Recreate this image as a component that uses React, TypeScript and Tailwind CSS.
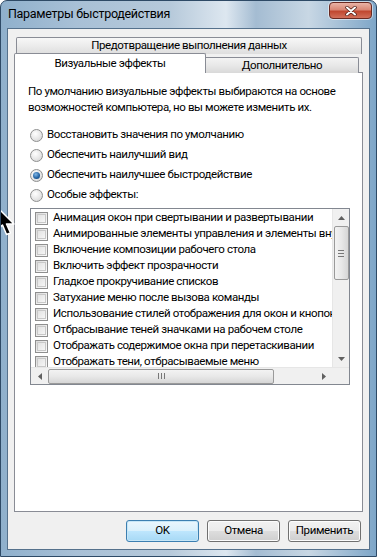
const effects = [
  "Анимация окон при свертывании и развертывании",
  "Анимированные элементы управления и элементы внутри окна",
  "Включение композиции рабочего стола",
  "Включить эффект прозрачности",
  "Гладкое прокручивание списков",
  "Затухание меню после вызова команды",
  "Использование стилей отображения для окон и кнопок",
  "Отбрасывание теней значками на рабочем столе",
  "Отображать содержимое окна при перетаскивании",
  "Отображать тени, отбрасываемые меню",
];

const radios = [
  { label: "Восстановить значения по умолчанию", checked: false },
  { label: "Обеспечить наилучший вид", checked: false },
  { label: "Обеспечить наилучшее быстродействие", checked: true },
  { label: "Особые эффекты:", checked: false },
];

function Radio({ checked }: { checked: boolean }) {
  return (
    <span className="w-[13px] h-[13px] rounded-full border border-[#8e8f8f] bg-[radial-gradient(circle_at_40%_35%,#ffffff_0%,#e6e6e6_55%,#cfcfcf_100%)] flex items-center justify-center shrink-0">
      {checked && (
        <span className="w-[7px] h-[7px] rounded-full bg-[radial-gradient(circle_at_40%_35%,#7fb6e6_0%,#1f5f9f_60%,#123f6e_100%)]" />
      )}
    </span>
  );
}

function Checkbox() {
  return (
    <span className="w-[13px] h-[13px] border border-[#8f8f8f] bg-[linear-gradient(135deg,#d9d9d9_0%,#f0f0f0_60%,#fafafa_100%)] shrink-0 flex items-center justify-center">
      <span className="w-[9px] h-[9px] border border-[#c8c8c8] bg-[linear-gradient(135deg,#e2e2e2_0%,#f6f6f6_100%)]" />
    </span>
  );
}

function Button({ label, focused }: { label: string; focused?: boolean }) {
  return (
    <button
      className={
        "w-[73px] h-[22px] rounded-[3px] border text-black flex items-center justify-center " +
        (focused
          ? "border-[#3c7fb1] bg-[linear-gradient(180deg,#eaf6fd_0%,#d9f0fc_50%,#bee6fd_51%,#a7d9f5_100%)] shadow-[inset_0_0_0_1px_#c6e6f7]"
          : "border-[#707070] bg-[linear-gradient(180deg,#f2f2f2_0%,#ebebeb_50%,#dddddd_51%,#cfcfcf_100%)] shadow-[inset_0_0_0_1px_#fcfcfc]")
      }
    >
      {label}
    </button>
  );
}

export default function App() {
  return (
    <div
      className="relative w-[377px] h-[557px] overflow-hidden rounded-t-[7px] border border-[#2e4a66] bg-[linear-gradient(90deg,#8fb0cc_0%,#a8c0d6_20%,#b6c9da_45%,#dde7f0_60%,#a4bcd2_68%,#c8d7e4_82%,#7ea6c8_100%)] flex flex-col text-black text-[11.5px] tracking-[-0.4px]"
      style={{ fontFamily: 'Roboto, "Noto Sans", sans-serif' }}
    >
      {/* Title bar */}
      <div className="h-[27px] flex items-start shrink-0">
        <span className="pl-[7px] pt-[5px] text-[12.5px] tracking-[-0.3px] leading-[16px]">Параметры быстродействия</span>
        <div className="ml-auto mr-[4px] mt-[1px] w-[43px] h-[17px] rounded-[4px] border border-[#6a2a22] bg-[linear-gradient(180deg,#e9b3a6_0%,#d98775_45%,#c0472f_55%,#d2705a_100%)] flex items-center justify-center shadow-[0_0_0_1px_rgba(255,255,255,0.5)]">
          <svg width="12" height="10" viewBox="0 0 12 10">
            <path d="M2 1.5 L10 8.5 M10 1.5 L2 8.5" stroke="#4a1b14" strokeWidth="3.4" strokeLinecap="round" />
            <path d="M2 1.5 L10 8.5 M10 1.5 L2 8.5" stroke="#ffffff" strokeWidth="2" strokeLinecap="round" />
          </svg>
        </div>
      </div>

      {/* Client area */}
      <div className="mx-[6px] mb-[6px] flex-1 bg-[#f0f0f0] border border-[#55718c] flex flex-col px-[6px]">
        {/* Tabs */}
        <div className="mt-[8px] ml-[2px] mr-[1px] h-[17px] border border-b-0 border-[#898c95] rounded-t-[2px] bg-[linear-gradient(180deg,#f7f7f7_0%,#ebebeb_50%,#dedede_100%)] flex items-center justify-center leading-none">
          Предотвращение выполнения данных
        </div>
        <div className="flex items-end h-[19px] -mb-px relative">
          <div className="w-[192px] h-[20px] border border-b-0 border-[#898c95] bg-white rounded-t-[2px] flex items-center justify-center z-10">
            Визуальные эффекты
          </div>
          <div className="w-[153px] h-[16px] border border-l-0 border-b-0 border-[#898c95] rounded-tr-[2px] bg-[linear-gradient(180deg,#f3f3f3_0%,#e8e8e8_50%,#d9d9d9_100%)] flex items-center justify-center">
            Дополнительно
          </div>
        </div>

        {/* Panel */}
        <div className="h-[440px] border border-[#898c95] bg-white px-[13px] pt-[10px]">
          <p className="leading-[16px]">
            По умолчанию визуальные эффекты выбираются на основе возможностей компьютера, но вы можете изменить их.
          </p>

          <div className="mt-[10px] flex flex-col">
            {radios.map((r) => (
              <div key={r.label} className="h-[20px] flex items-center gap-[4px] pl-[2px]">
                <Radio checked={r.checked} />
                <span>{r.label}</span>
              </div>
            ))}
          </div>

          {/* List box */}
          <div className="mt-[3px] ml-[2px] w-[320px] h-[177px] border border-[#828790] bg-white flex flex-col overflow-hidden">
            <div className="flex h-[158px]">
              <div className="flex-1 overflow-hidden pt-[1px]">
                {effects.map((e) => (
                  <div key={e} className="h-[16px] flex items-center gap-[5px] pl-[4px] whitespace-nowrap">
                    <Checkbox />
                    <span>{e}</span>
                  </div>
                ))}
              </div>
              {/* Vertical scrollbar */}
              <div className="w-[17px] shrink-0 bg-[#f0f0f0] border-l border-[#e6e6e6] flex flex-col items-center">
                <div className="h-[17px] flex items-center justify-center">
                  <svg width="7" height="4" viewBox="0 0 7 4"><path d="M0 4 L3.5 0 L7 4 Z" fill="#606060" /></svg>
                </div>
                <div className="w-[15px] h-[54px] rounded-[2px] border border-[#9a9a9a] bg-[linear-gradient(90deg,#f3f3f3_0%,#e8e8e8_50%,#d6d6d6_100%)] flex flex-col items-center justify-center gap-[2px]">
                  <span className="w-[6px] h-px bg-[#777]" />
                  <span className="w-[6px] h-px bg-[#777]" />
                  <span className="w-[6px] h-px bg-[#777]" />
                </div>
                <div className="mt-auto h-[17px] flex items-center justify-center">
                  <svg width="7" height="4" viewBox="0 0 7 4"><path d="M0 0 L3.5 4 L7 0 Z" fill="#606060" /></svg>
                </div>
              </div>
            </div>
            {/* Horizontal scrollbar */}
            <div className="flex h-[17px] border-t border-[#e6e6e6]">
              <div className="flex-1 bg-[#f0f0f0] flex items-center">
                <div className="w-[17px] h-full flex items-center justify-center">
                  <svg width="4" height="7" viewBox="0 0 4 7"><path d="M4 0 L0 3.5 L4 7 Z" fill="#606060" /></svg>
                </div>
                <div className="w-[226px] h-[15px] rounded-[2px] border border-[#9a9a9a] bg-[linear-gradient(180deg,#f3f3f3_0%,#e8e8e8_50%,#d6d6d6_100%)] flex items-center justify-center gap-[2px]">
                  <span className="w-px h-[6px] bg-[#777]" />
                  <span className="w-px h-[6px] bg-[#777]" />
                  <span className="w-px h-[6px] bg-[#777]" />
                </div>
                <div className="ml-auto w-[17px] h-full flex items-center justify-center">
                  <svg width="4" height="7" viewBox="0 0 4 7"><path d="M0 0 L4 3.5 L0 7 Z" fill="#606060" /></svg>
                </div>
              </div>
              <div className="w-[17px] bg-[#f0f0f0]" />
            </div>
          </div>
        </div>

        {/* Buttons */}
        <div className="mt-[8px] flex justify-end gap-[8px] pr-[2px]">
          <Button label="OK" focused />
          <Button label="Отмена" />
          <Button label="Применить" />
        </div>
      </div>

      {/* Mouse cursor */}
      <svg className="absolute left-[-5px] top-[205px]" width="22" height="32" viewBox="0 0 22 32">
        <path d="M1 1 L1 24 L6.5 19 L10.5 28.5 L14.5 27 L10.5 18 L18 18 Z" fill="#000" stroke="#fff" strokeWidth="1.5" strokeLinejoin="round" />
      </svg>
    </div>
  );
}
